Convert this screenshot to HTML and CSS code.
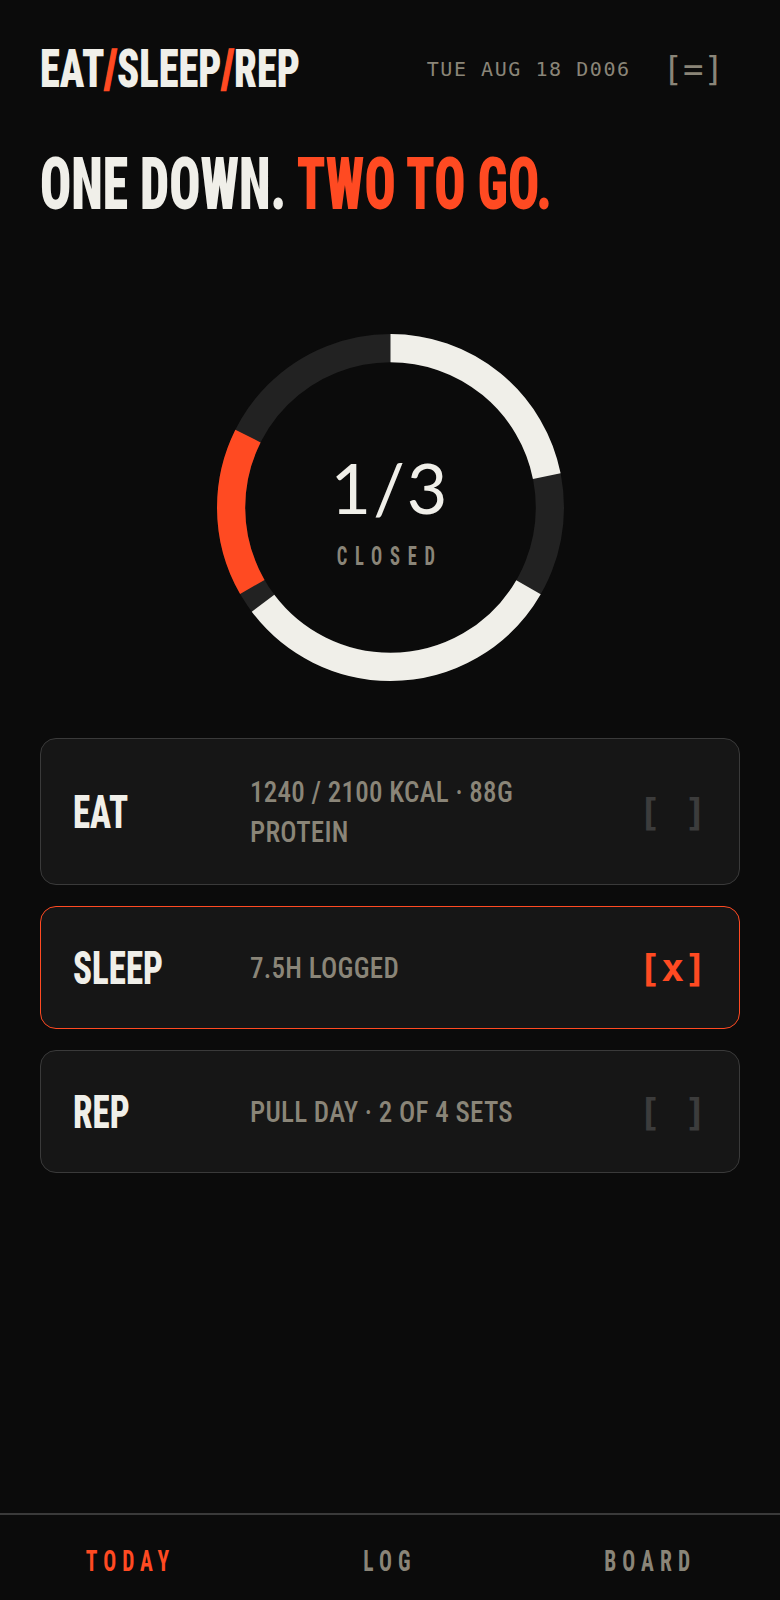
FILE: index.html
```html
<!DOCTYPE html>
<html lang="en">
<head>
<meta charset="utf-8">
<title>EAT/SLEEP/REP</title>
<link rel="stylesheet" href="styles.css">
</head>
<body>
<div class="app">
  <header class="top">
    <div class="logo"><span class="squeeze">EAT<span class="slash">/</span>SLEEP<span class="slash">/</span>REP</span></div>
    <div class="meta">
      <span class="date">TUE AUG 18 D006</span>
      <button class="menu">[=]</button>
    </div>
  </header>

  <h1 class="headline"><span class="squeeze">ONE DOWN. <span class="accent">TWO TO GO.</span></span></h1>

  <div class="ring-wrap">
    <svg class="ring" viewBox="0 0 347 347" width="347" height="347">
      <g transform="rotate(-90 173.5 173.5)">
        <circle class="track" cx="173.5" cy="173.5" r="159.4"></circle>
        <circle class="arc arc-white" cx="173.5" cy="173.5" r="159.4" stroke-dasharray="218.7 1100" stroke-dashoffset="0"></circle>
        <circle class="arc arc-white" cx="173.5" cy="173.5" r="159.4" stroke-dasharray="314.4 1100" stroke-dashoffset="-333.8"></circle>
        <circle class="arc arc-orange" cx="173.5" cy="173.5" r="159.4" stroke-dasharray="157.2 1100" stroke-dashoffset="-667.7"></circle>
      </g>
    </svg>
    <div class="ring-center">
      <div class="count">1/3</div>
      <div class="count-label"><span class="squeeze-c">CLOSED</span></div>
    </div>
  </div>

  <div class="cards">
    <div class="card">
      <div class="card-label"><span class="squeeze">EAT</span></div>
      <div class="card-detail">1240 / 2100 KCAL · 88G PROTEIN</div>
      <div class="check">[ ]</div>
    </div>
    <div class="card card-done">
      <div class="card-label"><span class="squeeze">SLEEP</span></div>
      <div class="card-detail">7.5H LOGGED</div>
      <div class="check check-done">[x]</div>
    </div>
    <div class="card">
      <div class="card-label"><span class="squeeze">REP</span></div>
      <div class="card-detail">PULL DAY · 2 OF 4 SETS</div>
      <div class="check">[ ]</div>
    </div>
  </div>

  <nav class="tabs">
    <a class="tab tab-active"><span class="squeeze-c">TODAY</span></a>
    <a class="tab"><span class="squeeze-c">LOG</span></a>
    <a class="tab"><span class="squeeze-c">BOARD</span></a>
  </nav>
</div>
</body>
</html>
```

FILE: styles.css
```css
* {
  box-sizing: border-box;
  margin: 0;
  padding: 0;
}

body {
  background: #0b0b0b;
  color: #f0efe9;
  font-family: "Roboto", "DejaVu Sans", sans-serif;
}

.app {
  width: 780px;
  height: 1600px;
  display: flex;
  flex-direction: column;
}

/* condensed display type */
.squeeze,
.squeeze-c {
  display: inline-block;
  white-space: nowrap;
  transform: scaleX(0.74);
}

.squeeze {
  transform-origin: left center;
}

.squeeze-c {
  transform-origin: center center;
}

.top {
  display: flex;
  justify-content: space-between;
  align-items: center;
  padding: 41px 40px 0;
}

.logo {
  width: 258px;
  white-space: nowrap;
  font-family: "Roboto", sans-serif;
  font-stretch: 75%;
  font-weight: 900;
  font-size: 54px;
  line-height: 56px;
  color: #f0efe9;
}

.logo .squeeze {
  transform: scaleX(0.75);
}

.slash {
  -webkit-text-stroke: 1.5px #ff4a22;
}

.slash,
.accent {
  color: #ff4a22;
}

.meta {
  display: flex;
  align-items: center;
  gap: 22px;
}

.date {
  font-family: "DejaVu Sans Mono", monospace;
  font-size: 20px;
  letter-spacing: 1.55px;
  color: #8a8578;
}

.menu {
  background: none;
  border: none;
  font-family: "DejaVu Sans Mono", monospace;
  font-size: 34px;
  line-height: 40px;
  color: #8a8578;
  padding: 0 16px 0 10px;
}

.headline {
  margin: 52px 40px 0;
  white-space: nowrap;
  font-family: "Roboto", sans-serif;
  font-stretch: 75%;
  font-weight: 900;
  font-size: 72px;
  line-height: 72px;
  color: #f0efe9;
}

.headline .squeeze {
  transform: scaleX(0.72);
}

.ring-wrap {
  position: relative;
  width: 347px;
  height: 347px;
  margin: 113px auto 0;
}

.ring {
  display: block;
}

.track,
.arc {
  fill: none;
  stroke-width: 28.2;
}

.track {
  stroke: #222222;
}

.arc-white {
  stroke: #f0efe9;
}

.arc-orange {
  stroke: #ff4a22;
}

.ring-center {
  position: absolute;
  inset: 0;
  display: flex;
  flex-direction: column;
  align-items: center;
  justify-content: center;
  padding-top: 5px;
}

.count {
  font-family: "Lato", sans-serif;
  font-weight: 400;
  font-size: 70px;
  line-height: 70px;
  letter-spacing: 2px;
  color: #f0efe9;
}

.count-label {
  margin-top: 22px;
  font-family: "Roboto", sans-serif;
  font-stretch: 75%;
  font-weight: 700;
  font-size: 25px;
  line-height: 25px;
  letter-spacing: 10.5px;
  color: #8a8578;
}

.cards {
  display: flex;
  flex-direction: column;
  gap: 21px;
  margin: 57px 40px 0;
}

.card {
  display: grid;
  grid-template-columns: 140px 1fr auto;
  column-gap: 37px;
  align-items: center;
  padding: 32.5px 32px;
  background: #161616;
  border: 1px solid #3a3a3a;
  border-radius: 16px;
}

.card-done {
  border-color: #ff4a22;
}

.card-label {
  white-space: nowrap;
  font-family: "Roboto", sans-serif;
  font-stretch: 75%;
  font-weight: 800;
  font-size: 46px;
  line-height: 56px;
  color: #f0efe9;
}

.card-label .squeeze {
  transform: scaleX(0.76);
}

.card-detail {
  max-width: 300px;
  transform: scaleX(0.9);
  transform-origin: left center;
  font-family: "Roboto", sans-serif;
  font-stretch: 75%;
  font-weight: 500;
  font-size: 30px;
  line-height: 40px;
  letter-spacing: 0.3px;
  color: #8a8578;
}

.check {
  font-family: "DejaVu Sans Mono", monospace;
  font-weight: 700;
  font-size: 38px;
  line-height: 40px;
  color: #3c3c3c;
}

.check-done {
  color: #ff4a22;
}

.tabs {
  margin-top: auto;
  height: 87px;
  padding-top: 6px;
  border-top: 2px solid #3a3a3a;
  display: grid;
  grid-template-columns: 1fr 1fr 1fr;
  align-items: center;
}

.tab {
  text-align: center;
  font-family: "Roboto", sans-serif;
  font-stretch: 75%;
  font-weight: 700;
  font-size: 29px;
  letter-spacing: 8.2px;
  color: #8a8578;
}

.tab-active {
  color: #ff4a22;
}
```
